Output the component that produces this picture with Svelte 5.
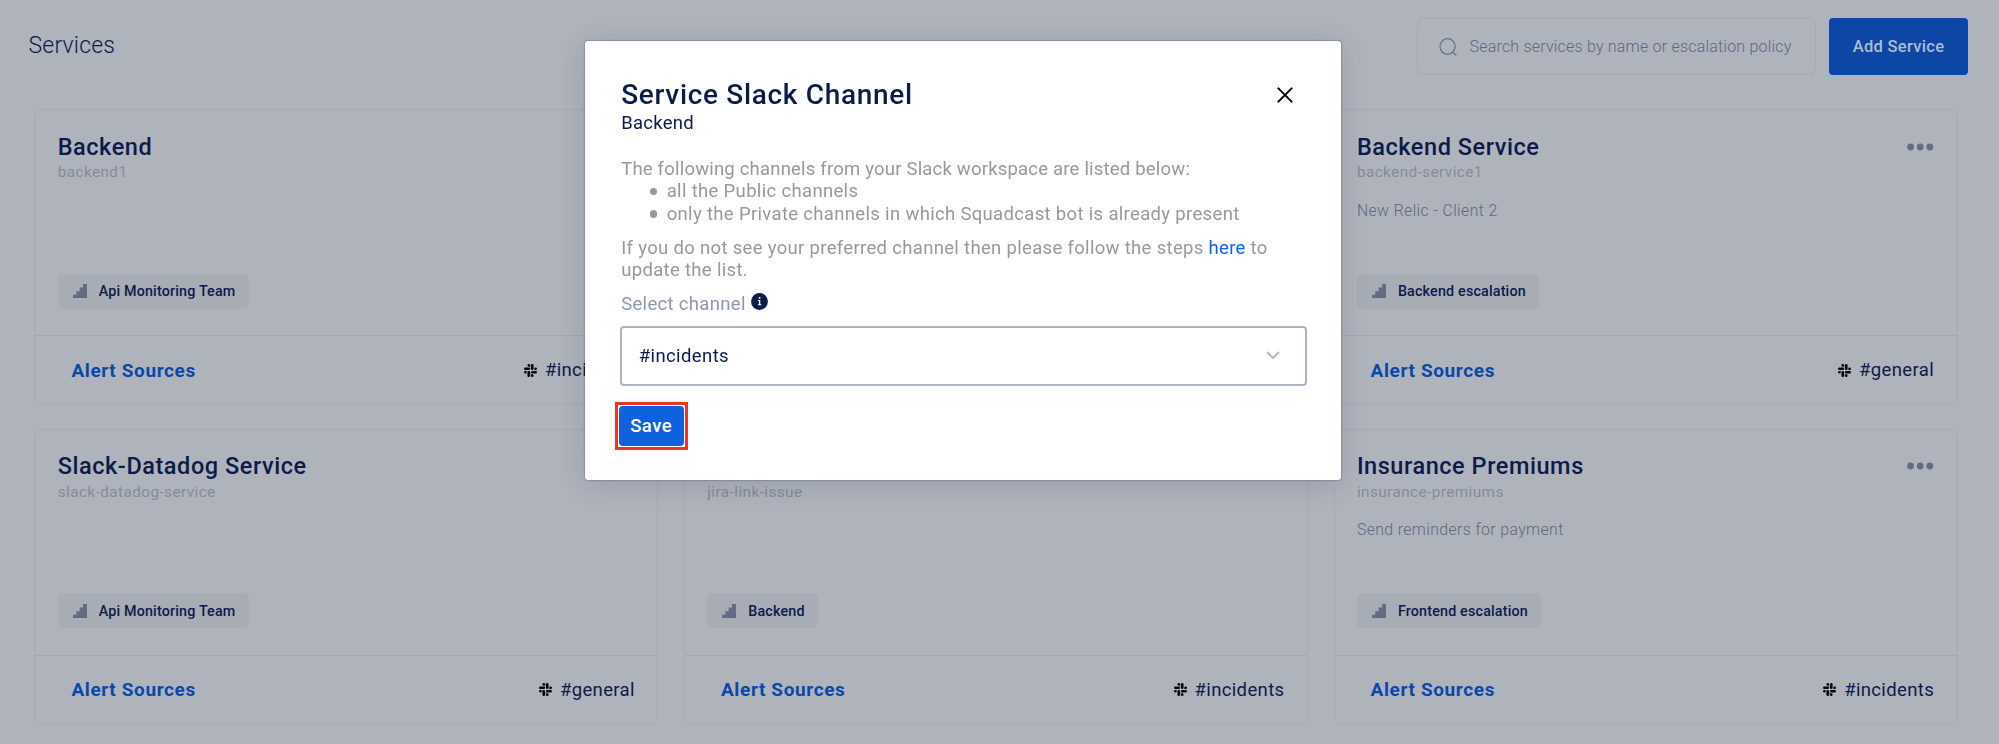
<script>
  const services = [
    { name: 'Backend', slug: 'backend1', note: '', team: 'Api Monitoring Team', channel: '#incidents' },
    { name: '', slug: '', note: '', team: '', channel: '' },
    { name: 'Backend Service', slug: 'backend-service1', note: 'New Relic - Client 2', team: 'Backend escalation', channel: '#general' },
    { name: 'Slack-Datadog Service', slug: 'slack-datadog-service', note: '', team: 'Api Monitoring Team', channel: '#general' },
    { name: '', slug: 'jira-link-issue', note: '', team: 'Backend', channel: '#incidents' },
    { name: 'Insurance Premiums', slug: 'insurance-premiums', note: 'Send reminders for payment', team: 'Frontend escalation', channel: '#incidents' }
  ];
</script>

<div class="page">
  <header>
    <h1>Services</h1>
    <div class="search">
      <svg width="18" height="18" viewBox="0 0 18 18" fill="none" stroke="#697287" stroke-width="1.2" stroke-linecap="round"><ellipse cx="8.6" cy="8.5" rx="7.6" ry="7.8" /><path d="M13.8 14.3 17 17.2" /></svg>
      <span class="hint">Search services by name or escalation policy</span>
    </div>
    <button class="add">Add Service</button>
  </header>

  <main>
    {#each services as s}
      <article>
        {#if s.slug}
          <div class="body">
            <div class="head">
              <h2>{s.name}</h2>
              <svg width="27" height="8" viewBox="0 0 27 8" fill="#636c80"><circle cx="3.6" cy="4" r="3.4" /><circle cx="13.2" cy="4" r="3.4" /><circle cx="22.8" cy="4" r="3.4" /></svg>
            </div>
            <div class="slug">{s.slug}</div>
            <div class="note">{s.note}</div>
            <div class="chip">
              <svg width="14" height="14" viewBox="0 0 14 14" fill="#636c80"><path d="M0 14v-3.2h3.3V7.2h3.4V3.6H10V0h4v14z" /></svg>
              <span>{s.team}</span>
            </div>
          </div>
          <footer>
            <span class="alerts">Alert Sources</span>
            <div class="channel">
              <svg width="13" height="13" viewBox="0 0 24 24" fill="#05070d"><path d="M5 15.2a2.5 2.5 0 1 1-2.5-2.5H5zM6.3 15.2a2.5 2.5 0 0 1 5 0v6.3a2.5 2.5 0 1 1-5 0zM8.8 5a2.5 2.5 0 1 1 2.5-2.5V5zM8.8 6.3a2.5 2.5 0 0 1 0 5H2.5a2.5 2.5 0 1 1 0-5zM19 8.8a2.5 2.5 0 1 1 2.5 2.5H19zM17.7 8.8a2.5 2.5 0 0 1-5 0V2.5a2.5 2.5 0 1 1 5 0zM15.2 19a2.5 2.5 0 1 1-2.5 2.5V19zM15.2 17.7a2.5 2.5 0 0 1 0-5h6.3a2.5 2.5 0 1 1 0 5z" /></svg>
              <span>{s.channel}</span>
            </div>
          </footer>
        {/if}
      </article>
    {/each}
  </main>
</div>

<section class="modal">
  <div class="top">
    <h3>Service Slack Channel</h3>
    <svg width="16" height="16" viewBox="0 0 16 16" stroke="#000" stroke-width="2" stroke-linecap="round"><path d="m1.4 1.4 13.2 13.2M14.6 1.4 1.4 14.6" /></svg>
  </div>
  <div class="sub">Backend</div>
  <div class="copy">
    <div>The following channels from your Slack workspace are listed below:</div>
    <ul>
      <li>all the Public channels</li>
      <li>only the Private channels in which Squadcast bot is already present</li>
    </ul>
    <p>If you do not see your preferred channel then please follow the steps <span class="link">here</span> to<br />update the list.</p>
  </div>
  <div class="label">
    <span>Select channel</span>
    <svg width="17" height="17" viewBox="0 0 17 17"><circle cx="8.5" cy="8.5" r="8.4" fill="#0b1b4a" /><path d="M7 7h2.3v4.3h1v1H6.9v-1h1V8H7zM7.8 4h1.6v1.7H7.8z" fill="#fff" /></svg>
  </div>
  <div class="select">
    <span>#incidents</span>
    <svg width="14" height="9" viewBox="0 0 14 9" fill="none" stroke="#b3bac8" stroke-width="2" stroke-linecap="round" stroke-linejoin="round"><path d="m1.5 1.5 5.5 5.5 5.5-5.5" /></svg>
  </div>
  <div class="mark"><button class="save">Save</button></div>
</section>

<style>
  :global(body) { background: #afb3bc; overflow: hidden; }
  .page, .modal, button { font-family: Roboto, sans-serif; }
  h1, h2, h3, p, ul { margin: 0; padding: 0; }
  svg { display: block; flex: none; }
  .page { height: 744px; overflow: hidden; color: #0b1b4a; white-space: nowrap; }
  header { display: flex; align-items: center; height: 93px; padding: 0 31px 0 28.5px; }
  h1 { flex: 1; font-size: 23px; font-weight: 300; letter-spacing: 0.2px; padding-bottom: 2px; }
  .search { box-sizing: border-box; width: 399px; height: 57px; border: 1px solid #a4a9b5; border-radius: 7px; display: flex; align-items: center; gap: 12.5px; padding-left: 21px; margin-right: 13px; }
  .hint { font-size: 16px; font-weight: 300; color: #5f687e; letter-spacing: 0.2px; }
  .add { width: 139px; height: 57px; border: 0; border-radius: 4px; background: #0d47a6; color: #b0bbd0; font-size: 16.5px; font-weight: 500; letter-spacing: 0.3px; padding: 0 0 1px; }
  main { display: grid; grid-template-columns: repeat(3, 624px); grid-auto-rows: 296px; gap: 23.5px 25.6px; padding: 16px 0 0 34.4px; }
  article { box-sizing: border-box; border: 1px solid #a6abb8; border-radius: 7px; display: flex; flex-direction: column; }
  .body { flex: 1; display: flex; flex-direction: column; align-items: flex-start; padding: 22.5px 23px 26.5px 22.3px; }
  .head { width: 100%; min-height: 28px; display: flex; justify-content: space-between; align-items: center; }
  h2 { font-size: 23.5px; line-height: 28px; font-weight: 500; letter-spacing: 0.55px; }
  .slug { font-size: 15.3px; line-height: 20px; margin-top: 1.5px; color: #868c9b; letter-spacing: 0.43px; }
  .note { font-size: 15.8px; line-height: 20px; margin-top: 18.5px; font-weight: 300; color: #5f687e; letter-spacing: 0.4px; }
  .chip { margin-top: auto; height: 35px; display: flex; align-items: center; gap: 12px; padding: 0 13.5px 0 15px; border-radius: 5px; background: #a8acb5; font-size: 14.3px; font-weight: 500; letter-spacing: 0.18px; }
  footer { height: 68px; border-top: 1px solid #a2a8b5; display: flex; align-items: center; justify-content: space-between; padding: 0 22.5px 0 36px; font-size: 18.5px; }
  .alerts { color: #0a48a8; font-weight: 700; font-size: 19px; letter-spacing: 0.62px; }
  .channel { display: flex; align-items: center; gap: 8px; letter-spacing: 0.36px; }
  .modal { position: fixed; left: 584.7px; top: 40.5px; box-sizing: border-box; width: 756px; height: 439px; padding: 37.5px 34px 0 36.5px; background: #fff; border-radius: 3px; box-shadow: 0 0 2px rgba(9, 20, 50, .6), 0 4px 30px rgba(9, 20, 50, .14); color: #0b1b4a; font-size: 18.5px; line-height: 22.5px; letter-spacing: 0.25px; white-space: nowrap; }
  .top { display: flex; align-items: center; justify-content: space-between; height: 34px; padding-right: 13.5px; }
  h3 { font-size: 28px; line-height: 34px; font-weight: 500; letter-spacing: 0.68px; }
  .copy { color: #999; margin-top: 23px; letter-spacing: 0.2px; }
  ul { list-style: none; }
  li { padding-left: 45.5px; display: flex; align-items: center; letter-spacing: 0.33px; }
  li::before { content: ''; width: 7.5px; height: 7.5px; border-radius: 50%; background: #999; margin-left: -17px; margin-right: 9.5px; }
  p { margin-top: 11.5px; letter-spacing: 0.32px; }
  .link { color: #0f62e6; }
  .label { color: #8e99b1; display: flex; gap: 5.5px; margin-top: 11.5px; letter-spacing: 0.32px; }
  .select { box-sizing: border-box; width: 687px; height: 60.5px; margin: 10px 0 0 -1.5px; border: 2px solid #abb3c4; border-radius: 4px; display: flex; align-items: center; justify-content: space-between; padding: 0 24.5px 0 17px; letter-spacing: 0.4px; }
  .mark { box-sizing: border-box; width: 73px; height: 48px; border: 3px solid #ee3524; padding: 1px; margin: 15.5px 0 0 -6.5px; display: flex; }
  .save { flex: 1; border: 0; border-radius: 4px; background: #0f62de; color: #fff; font-size: 18.5px; font-weight: 500; letter-spacing: 0.5px; padding: 0; }
</style>
